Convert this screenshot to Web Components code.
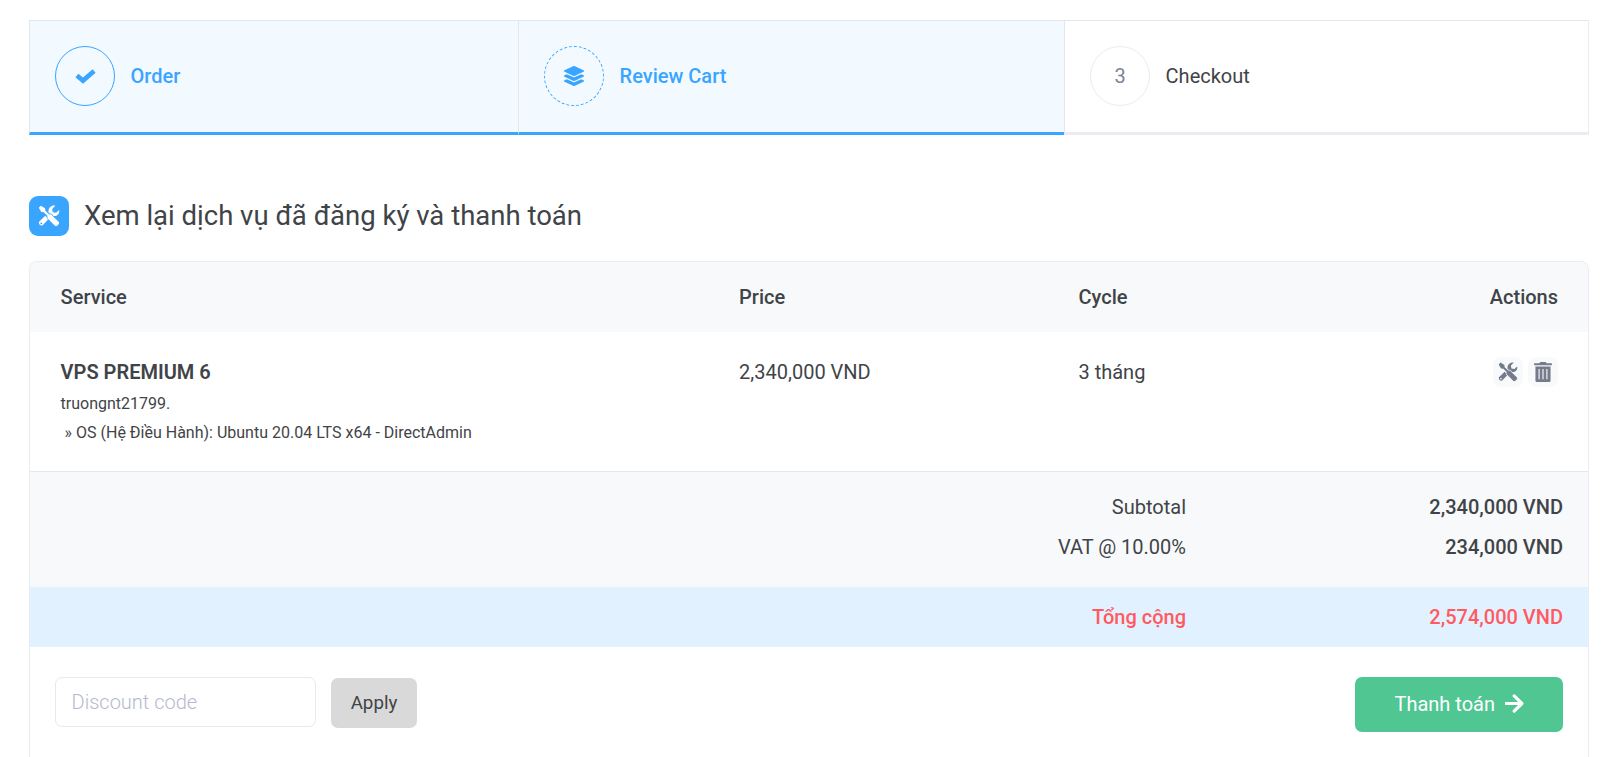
<!DOCTYPE html>
<html lang="vi">
<head>
<meta charset="utf-8">
<title>Review Cart</title>
<style>
html,body{margin:0;height:757px;overflow:hidden;background:#fff}
body{font-family:Roboto,"Liberation Sans",sans-serif;font-size:20px;line-height:30px;color:#3f4448;box-sizing:border-box}
</style>
</head>
<body>
<cart-page></cart-page>
<script>
const icons = {
  check: ['0 0 21 15', '<path d="M1.9 6.4 8 11.6 19.1 2" fill="none" stroke="currentColor" stroke-width="4.6"/>'],
  layers: ['0 0 512 512', '<path fill="currentColor" d="M12.41 148.02l232.94 105.67c6.8 3.09 14.49 3.09 21.29 0l232.94-105.67c16.55-7.51 16.55-32.52 0-40.03L266.65 2.31a25.607 25.607 0 0 0-21.29 0L12.41 107.98c-16.55 7.51-16.55 32.53 0 40.04zm487.18 88.28l-58.09-26.33-161.64 73.27c-7.56 3.43-15.59 5.17-23.86 5.17s-16.29-1.74-23.86-5.17L70.51 209.97l-58.1 26.33c-16.55 7.5-16.55 32.5 0 40l232.94 105.59c6.8 3.08 14.49 3.08 21.29 0L499.59 276.3c16.55-7.5 16.55-32.5 0-40zm0 127.8l-57.87-26.23-161.86 73.37c-7.56 3.43-15.59 5.17-23.86 5.17s-16.29-1.74-23.86-5.17L70.29 337.87 12.41 364.1c-16.55 7.5-16.55 32.5 0 40l232.94 105.59c6.8 3.08 14.49 3.08 21.29 0L499.59 404.1c16.55-7.5 16.55-32.5 0-40z"/>'],
  tools: ['0 0 20 20', '<path fill="currentColor" fill-rule="evenodd" d="M.7 2.5 2.6.6 6.4 3 6.7 5.2 10.2 8.6C11 8.4 11.8 8.5 12.4 9L18.7 15.2Q19.7 16.4 18.7 17.5L17.4 18.8Q16.3 19.7 15.2 18.7L9 12.5C8.4 11.8 8.4 10.9 8.7 10.1L5.3 6.7 3 6.4ZM19.2 4.6C20 7.7 17.4 10.6 14.2 10L12.9 8.6C11.9 7.8 11 7.5 10.2 7.5L9.6 6.8C9 3 12.1-.2 15.7.7L12.9 3.6 13.4 6.6 16.4 7.1ZM8 11.2C8 12.1 8.3 12.8 9 13.5L4.2 18.5A2.5 2.5 0 0 1 1 15.3L6.6 9.8ZM3.6 16.2a.8.8 0 1 0-1.2 1.1.8.8 0 0 0 1.2-1.1Z"/>'],
  trash: ['0 0 16 18', '<path fill="currentColor" fill-rule="evenodd" d="M0 1.2H4.8L5.5 0H10.5L11.2 1.2H16V3H0ZM1.2 4H14.8V16.8Q14.8 18 13.6 18H2.4Q1.2 18 1.2 16.8ZM4 6.2V15.6H5V6.2ZM7.5 6.2V15.6H8.5V6.2ZM11 6.2V15.6H12V6.2Z"/>'],
  arrow: ['0 0 18 18', '<path d="M1 9H15M8.7 1.8 16 9 8.7 16.2" fill="none" stroke="currentColor" stroke-width="3" stroke-linecap="round" stroke-linejoin="round"/>']
};
function define(name, html) {
  const t = document.createElement('template');
  t.innerHTML = html;
  customElements.define(name, class extends HTMLElement {
    connectedCallback() {
      if (this.shadowRoot) return;
      this.attachShadow({mode: 'open'}).append(t.content.cloneNode(true));
    }
  });
}
customElements.define('ui-icon', class extends HTMLElement {
  connectedCallback() {
    if (this.shadowRoot) return;
    const [box, body] = icons[this.getAttribute('name')];
    this.attachShadow({mode: 'open'}).innerHTML =
      `<style>:host{display:block;flex:none;width:20px;height:20px}svg{display:block;width:100%;height:100%}</style><svg viewBox="${box}" aria-hidden="true">${body}</svg>`;
  }
});
define('step-item', `<style>
:host{display:flex;align-items:center;gap:15.6px;height:115px;padding:0 25px 1px;box-sizing:border-box;border:1px solid #e4e6ef;border-right:0;border-bottom:3px solid #ebebf3;color:#3f4448}
:host([active]){background:#f2f9ff;border-bottom-color:#3aa5ff;color:#3aa5ff;font-weight:500}
:host(:last-of-type){border-right:1px solid #ebebf3}
.c{width:60px;height:60px;box-sizing:border-box;flex:none;border:1px solid #ebebf3;border-radius:50%;display:flex;align-items:center;justify-content:center;color:#7e8299;font-weight:400}
:host([active]) .c{border-color:#3aa5ff;color:#3aa5ff}
:host([current]) .c{border-style:dashed}
</style><div class="c"><slot name="mark"></slot></div><slot></slot>`);
define('page-title', `<style>
:host{display:flex;align-items:center;gap:15px;height:40px;font-size:27.5px}
.b{width:40px;height:40px;border-radius:9px;background:#3aa5ff;color:#fff;display:flex;align-items:center;justify-content:center}
ui-icon{width:22px;height:22px}
</style><div class="b"><ui-icon name="tools"></ui-icon></div><slot></slot>`);
define('cart-row', `<style>
:host{display:grid;grid-template-columns:678.5px 339.4px 1fr auto;padding:25px 30px 0 30.6px;height:140px;box-sizing:border-box;border-bottom:1px solid #e4e6ef}
:host([head]){height:70px;padding-top:20px;background:#f8f9fb;border:0;font-weight:500}
</style><slot></slot>`);
define('icon-button', `<style>
:host{display:flex;align-items:center;justify-content:center;width:30px;height:30px;border-radius:8px;background:#f8f9fb;color:#747c8c}
</style><slot></slot>`);
define('total-row', `<style>
:host{display:grid;grid-template-columns:1156px 1fr;height:40px;align-items:center;text-align:right;padding-right:25px}
:host([grand]){height:60px;background:#e1f1ff;color:#ff5b5f;font-weight:500}
.v{font-weight:500}
</style><div><slot></slot></div><div class="v"><slot name="value"></slot></div>`);
define('coupon-form', `<style>
:host{display:flex;gap:15px}
input{width:261px;height:50px;box-sizing:border-box;border:1px solid #e8e8f1;border-radius:7px;padding:0 15.6px;font:300 20px Roboto,sans-serif;outline:0;background:#fff}
input::placeholder{color:#b5b9d0;opacity:1}
button{width:86px;height:50px;margin-top:1px;padding:0;border:0;border-radius:7px;background:#d9d9d9;color:#3f4448;font:400 18.75px Roboto,sans-serif}
</style><input placeholder="Discount code" aria-label="Discount code"><button>Apply</button>`);
define('checkout-button', `<style>
:host{display:flex;align-items:center;justify-content:center;gap:9.5px;width:208px;height:55px;padding-bottom:2px;box-sizing:border-box;border-radius:7px;background:#50c792;color:#fff}
ui-icon{width:19px;height:19px}
</style><slot></slot><ui-icon name="arrow"></ui-icon>`);
define('cart-page', `<style>
:host{display:block;padding:20px 17px 0 29px}
nav{display:grid;grid-template-columns:489px 546px 525px}
page-title{margin:61px 0 25px}
main{display:block;border:1px solid #ebebf3;border-bottom:0;border-radius:8px 8px 0 0;overflow:hidden;height:496px;box-sizing:border-box}
.a{text-align:right}
.n{font-weight:600}
.s{font-size:16px;line-height:29px}
.n + .s{margin-top:2px}
.p{white-space:pre}
.acts{display:flex;gap:5px}
.t{background:#f8f9fb;padding:15px 0 20px}
footer{display:flex;align-items:flex-start;justify-content:space-between;padding:30px 25px 0}
.k{width:21px;height:15px}
</style>
<nav>
<step-item active><ui-icon slot="mark" class="k" name="check"></ui-icon>Order</step-item>
<step-item active current><ui-icon slot="mark" name="layers"></ui-icon>Review Cart</step-item>
<step-item><span slot="mark">3</span>Checkout</step-item>
</nav>
<page-title>Xem lại dịch vụ đã đăng ký và thanh toán</page-title>
<main>
<cart-row head><div>Service</div><div>Price</div><div>Cycle</div><div class="a">Actions</div></cart-row>
<cart-row><div><div class="n">VPS PREMIUM 6</div><div class="s">truongnt21799.</div><div class="s p"> » OS (Hệ Điều Hành): Ubuntu 20.04 LTS x64 - DirectAdmin</div></div><div>2,340,000 VND</div><div>3 tháng</div>
<div class="acts"><icon-button><ui-icon name="tools"></ui-icon></icon-button><icon-button><ui-icon name="trash"></ui-icon></icon-button></div></cart-row>
<div class="t"><total-row>Subtotal<span slot="value">2,340,000 VND</span></total-row><total-row>VAT @ 10.00%<span slot="value">234,000 VND</span></total-row></div>
<total-row grand>Tổng cộng<span slot="value">2,574,000 VND</span></total-row>
<footer><coupon-form></coupon-form><checkout-button>Thanh toán</checkout-button></footer>
</main>`);
</script>
</body>
</html>
